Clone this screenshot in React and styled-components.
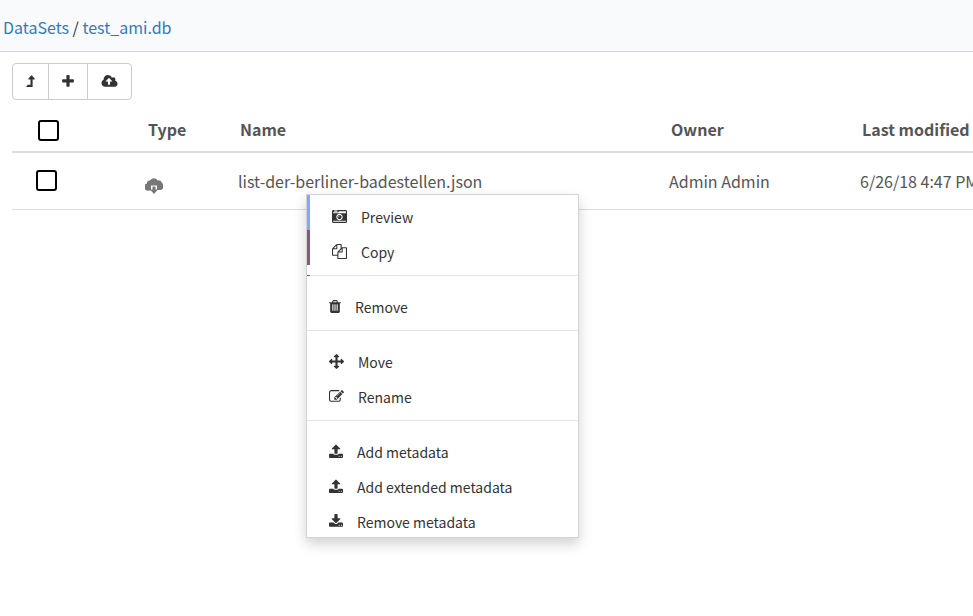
import React from "react";
import styled, { createGlobalStyle } from "styled-components";

const GlobalStyle = createGlobalStyle`
  * { box-sizing: border-box; }
  body {
    min-height: 100vh;
    margin: 0;
    background: #fff;
    color: #555;
    font-family: "Source Sans Pro", "Noto Sans CJK SC", sans-serif;
    font-size: 16px;
    line-height: 24px;
    overflow-x: hidden;
  }
`;

const icons = {
  levelUp: {
    width: 9,
    box: "384 0 1027 1792",
    d: "M1402 619q-18 37-58 37h-192v864q0 14-9 23t-23 9h-704q-21 0-29-18-8-20 4-35l160-192q9-11 25-11h320v-640h-192q-40 0-58-37-17-37 9-68l320-384q18-22 49-22t49 22l320 384q27 32 9 68z",
  },
  plus: {
    width: 12,
    box: "192 0 1408 1792",
    d: "M1600 736v192q0 40-28 68t-68 28h-416v416q0 40-28 68t-68 28h-192q-40 0-68-28t-28-68v-416h-416q-40 0-68-28t-28-68v-192q0-40 28-68t68-28h416v-416q0-40 28-68t68-28h192q40 0 68 28t28 68v416h416q40 0 68 28t28 68z",
  },
  cloudUpload: {
    width: 17,
    box: "0 0 1920 1792",
    d: "M1280 864q0-14-9-23l-352-352q-9-9-23-9t-23 9l-351 351q-10 12-10 24 0 14 9 23t23 9h224v352q0 13 9.5 22.5t22.5 9.5h192q13 0 22.5-9.5t9.5-22.5v-352h224q13 0 22.5-9.5t9.5-22.5zm640 288q0 159-112.5 271.5t-271.5 112.5h-1088q-185 0-316.5-131.5t-131.5-316.5q0-130 70-240t188-165q-2-30-2-43 0-212 150-362t362-150q156 0 285.5 87t188.5 231q71-62 166-62 106 0 181 75t75 181q0 76-41 138 130 31 213.5 135.5t83.5 238.5z",
  },
  camera: {
    width: 15,
    box: "0 0 1792 1792",
    d: "M928 832q0-14-9-23t-23-9q-66 0-113 47t-47 113q0 14 9 23t23 9 23-9 9-23q0-40 28-68t68-28q14 0 23-9t9-23zm224 130q0 106-75 181t-181 75-181-75-75-181 75-181 181-75 181 75 75 181zm-1024 574h1536v-128h-1536v128zm1152-574q0-159-112.5-271.5t-271.5-112.5-271.5 112.5-112.5 271.5 112.5 271.5 271.5 112.5 271.5-112.5 112.5-271.5zm-1024-642h384v-128h-384v128zm-128 192h1536v-256h-828l-64 128h-644v128zm1664-256v1280q0 53-37.5 90.5t-90.5 37.5h-1536q-53 0-90.5-37.5t-37.5-90.5v-1280q0-53 37.5-90.5t90.5-37.5h1536q53 0 90.5 37.5t37.5 90.5z",
  },
  copy: {
    width: 15,
    box: "0 0 1792 1792",
    d: "M1696 384q40 0 68 28t28 68v1216q0 40-28 68t-68 28h-960q-40 0-68-28t-28-68v-288h-544q-40 0-68-28t-28-68v-672q0-40 20-88t48-76l408-408q28-28 76-48t88-20h416q40 0 68 28t28 68v328q68-40 128-40h416zm-544 213l-299 299h299v-299zm-640-384l-299 299h299v-299zm196 647l316-316v-416h-384v416q0 40-28 68t-68 28h-416v640h512v-256q0-40 20-88t48-76zm956 804v-1152h-384v416q0 40-28 68t-68 28h-416v640h896z",
  },
  trash: {
    width: 12,
    box: "192 0 1408 1792",
    d: "M704 1376v-704q0-14-9-23t-23-9h-64q-14 0-23 9t-9 23v704q0 14 9 23t23 9h64q14 0 23-9t9-23zm256 0v-704q0-14-9-23t-23-9h-64q-14 0-23 9t-9 23v704q0 14 9 23t23 9h64q14 0 23-9t9-23zm256 0v-704q0-14-9-23t-23-9h-64q-14 0-23 9t-9 23v704q0 14 9 23t23 9h64q14 0 23-9t9-23zm-544-992h448l-48-117q-7-9-17-11h-317q-10 2-17 11zm928 32v64q0 14-9 23t-23 9h-96v948q0 83-47 143.5t-113 60.5h-832q-66 0-113-58.5t-47-141.5v-952h-96q-14 0-23-9t-9-23v-64q0-14 9-23t23-9h309l70-167q15-37 54-63t79-26h320q40 0 79 26t54 63l70 167h309q14 0 23 9t9 23z",
  },
  move: {
    width: 15,
    box: "0 0 1792 1792",
    d: "M1792 896q0 26-19 45l-256 256q-19 19-45 19t-45-19-19-45v-128h-384v384h128q26 0 45 19t19 45-19 45l-256 256q-19 19-45 19t-45-19l-256-256q-19-19-19-45t19-45 45-19h128v-384h-384v128q0 26-19 45t-45 19-45-19l-256-256q-19-19-19-45t19-45l256-256q19-19 45-19t45 19 19 45v128h384v-384h-128q-26 0-45-19t-19-45 19-45l256-256q19-19 45-19t45 19l256 256q19 19 19 45t-19 45-45 19h-128v384h384v-128q0-26 19-45t45-19 45 19l256 256q19 19 19 45z",
  },
  edit: {
    width: 15,
    box: "0 0 1792 1792",
    d: "M888 1184l116-116-152-152-116 116v56h96v96h56zm440-720q-16-16-33 1l-350 350q-17 17-1 33t33-1l350-350q17-17 1-33zm80 594v190q0 119-84.5 203.5t-203.5 84.5h-832q-119 0-203.5-84.5t-84.5-203.5v-832q0-119 84.5-203.5t203.5-84.5h832q63 0 117 25 15 7 18 23 3 17-9 29l-49 49q-14 14-32 8-23-6-45-6h-832q-66 0-113 47t-47 113v832q0 66 47 113t113 47h832q66 0 113-47t47-113v-126q0-13 9-22l64-64q15-15 35-7t20 29zm-96-738l288 288-672 672h-288v-288zm444 132l-92 92-288-288 92-92q28-28 68-28t68 28l152 152q28 28 28 68t-28 68z",
  },
  upload: {
    width: 14,
    box: "64 0 1664 1792",
    d: "M1344 1472q0-26-19-45t-45-19-45 19-19 45 19 45 45 19 45-19 19-45zm256 0q0-26-19-45t-45-19-45 19-19 45 19 45 45 19 45-19 19-45zm128-224v320q0 40-28 68t-68 28h-1472q-40 0-68-28t-28-68v-320q0-40 28-68t68-28h427q21 56 70.5 92t110.5 36h256q61 0 110.5-36t70.5-92h427q40 0 68 28t28 68zm-325-648q-17 40-59 40h-256v448q0 26-19 45t-45 19h-256q-26 0-45-19t-19-45v-448h-256q-42 0-59-40-17-39 14-69l448-448q18-19 45-19t45 19l448 448q31 30 14 69z",
  },
  download: {
    width: 14,
    box: "64 0 1664 1792",
    d: "M1344 1344q0-26-19-45t-45-19-45 19-19 45 19 45 45 19 45-19 19-45zm256 0q0-26-19-45t-45-19-45 19-19 45 19 45 45 19 45-19 19-45zm128-224v320q0 40-28 68t-68 28h-1472q-40 0-68-28t-28-68v-320q0-40 28-68t68-28h465l135 136q58 56 136 56t136-56l136-136h464q40 0 68 28t28 68zm-325-569q17 41-14 70l-448 448q-18 19-45 19t-45-19l-448-448q-31-29-14-70 17-39 59-39h256v-448q0-26 19-45t45-19h256q26 0 45 19t19 45v448h256q42 0 59 39z",
  },
};

const Glyph = styled.svg`
  display: block;
  flex: none;
  height: 15px;
  fill: currentColor;
`;

function Icon({ name }) {
  const { width, box, d } = icons[name];
  return (
    <Glyph width={width} viewBox={box} aria-hidden="true">
      <path d={d} />
    </Glyph>
  );
}

const TypeGlyph = styled.svg`
  display: block;
  width: 18px;
  height: 16px;
  margin-top: 11px;
  fill: #777;
`;

const Header = styled.header`
  padding: 15px 3px 12px;
  background: #f9fafc;
  border-bottom: 1px solid #d3d6da;
  color: #333;
`;

const Crumb = styled.a`
  color: #337ab7;
  text-decoration: none;
`;

const Main = styled.main`
  padding: 11px 0 0 12px;
`;

const ButtonGroup = styled.div`
  display: flex;
`;

const ToolButton = styled.button`
  display: flex;
  align-items: center;
  height: 37px;
  padding: 0 13px;
  border: 1px solid #ccc;
  background: #fff;
  color: #333;
  cursor: pointer;
  &:first-child { border-radius: 4px 0 0 4px; }
  &:last-child { border-radius: 0 4px 4px 0; }
  & + & { margin-left: -1px; }
`;

const Table = styled.table`
  width: 100%;
  margin-top: 10px;
  border-collapse: separate;
  border-spacing: 0;
  table-layout: fixed;
`;

const HeadCell = styled.th`
  width: ${(p) => p.$width || "auto"};
  height: 43px;
  padding: ${(p) => (p.$check ? "0 0 0 26px" : "0 0 3px 10px")};
  border-bottom: 2px solid #ddd;
  font-weight: 700;
  text-align: left;
  white-space: nowrap;
`;

const Cell = styled.td`
  position: relative;
  height: 57px;
  padding: 0 0 1px ${(p) => p.$indent || 8}px;
  border-bottom: 1px solid #ddd;
  white-space: nowrap;
`;

const Checkbox = styled.input`
  appearance: none;
  display: block;
  width: 21px;
  height: 21px;
  margin: 0;
  border: 2px solid #000;
  border-radius: 3px;
  background: #fff;
  &:checked { background: #337ab7; }
`;

const Menu = styled.div`
  position: absolute;
  z-index: 2;
  top: 41px;
  left: 76px;
  width: 273px;
  padding-bottom: 2px;
  border: 1px solid #d4d4d4;
  background: #fff;
  box-shadow: 0 6px 12px rgba(0, 0, 0, 0.18);
`;

const MenuItem = styled.button`
  display: flex;
  align-items: center;
  gap: 14px;
  width: 100%;
  height: 35px;
  padding: 8px 12px 0 22px;
  border: 0;
  border-left: ${(p) => (p.$accent ? `3px solid ${p.$accent}` : "0")};
  background: transparent;
  color: #333;
  font: inherit;
  font-size: 14px;
  line-height: 20px;
  text-align: left;
  cursor: pointer;
`;

const Divider = styled.hr`
  height: 1px;
  margin: 10px 0 9px;
  border: 0;
  border-left: ${(p) => (p.$accent ? `3px solid ${p.$accent}` : "0")};
  background: #e5e5e5;
`;

const groups = [
  [
    { icon: "camera", label: "Preview", accent: "#7aabff" },
    { icon: "copy", label: "Copy", accent: "#80598a" },
  ],
  [{ icon: "trash", label: "Remove" }],
  [
    { icon: "move", label: "Move" },
    { icon: "edit", label: "Rename" },
  ],
  [
    { icon: "upload", label: "Add metadata" },
    { icon: "upload", label: "Add extended metadata" },
    { icon: "download", label: "Remove metadata" },
  ],
];

function ContextMenu() {
  return (
    <Menu role="menu">
      {groups.map((items, index) => (
        <React.Fragment key={items[0].label}>
          {index > 0 && <Divider $accent={index === 1 ? "#e91e63" : undefined} />}
          {items.map((item) => (
            <MenuItem key={item.label} type="button" role="menuitem" $accent={item.accent}>
              <Icon name={item.icon} />
              {item.label}
            </MenuItem>
          ))}
        </React.Fragment>
      ))}
    </Menu>
  );
}

export default function App() {
  return (
    <>
      <GlobalStyle />
      <Header>
        <nav aria-label="Breadcrumb">
          <Crumb href="#datasets">DataSets</Crumb> / <Crumb href="#test_ami">test_ami.db</Crumb>
        </nav>
      </Header>
      <Main>
        <ButtonGroup>
          <ToolButton type="button" aria-label="Up one level"><Icon name="levelUp" /></ToolButton>
          <ToolButton type="button" aria-label="Add"><Icon name="plus" /></ToolButton>
          <ToolButton type="button" aria-label="Upload"><Icon name="cloudUpload" /></ToolButton>
        </ButtonGroup>
        <Table>
          <thead>
            <tr>
              <HeadCell $width="126px" $check>
                <Checkbox type="checkbox" aria-label="Select all" />
              </HeadCell>
              <HeadCell $width="92px">Type</HeadCell>
              <HeadCell>Name</HeadCell>
              <HeadCell $width="191px">Owner</HeadCell>
              <HeadCell $width="121px">Last modified</HeadCell>
            </tr>
          </thead>
          <tbody>
            <tr>
              <Cell $indent={24}>
                <Checkbox type="checkbox" aria-label="Select list-der-berliner-badestellen.json" />
              </Cell>
              <Cell $indent={7}>
                <TypeGlyph viewBox="0 0 18 16" role="img" aria-label="Downloadable file">
                  <path d="M4 12.5A3.6 3.6 0 0 1 2 5.4 2.4 2.4 0 0 1 5 2.6 4.4 4.4 0 0 1 12.6 2.4 3.6 3.6 0 0 1 17 5 3.9 3.9 0 0 1 14.2 12H12V7.5H6V12.5Z" />
                  <path d="M7.5 8.5H10.5V11.5H13L9 16 5 11.5H7.5Z" />
                </TypeGlyph>
              </Cell>
              <Cell>
                list-der-berliner-badestellen.json
                <ContextMenu />
              </Cell>
              <Cell>Admin Admin</Cell>
              <Cell>6/26/18 4:47 PM</Cell>
            </tr>
          </tbody>
        </Table>
      </Main>
    </>
  );
}
